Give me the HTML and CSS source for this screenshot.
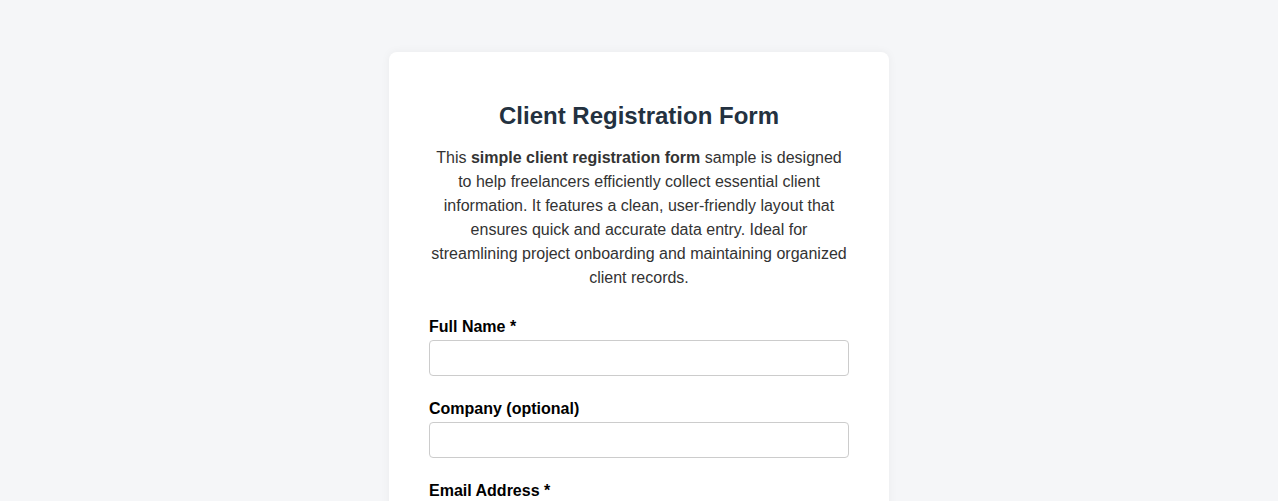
FILE: index.html
```html
<!DOCTYPE html>
<html lang="en">
<head>
    <meta charset="UTF-8">
    <meta name="viewport" content="width=device-width, initial-scale=1.0">
    <title>Client Registration Form</title>
    <link rel="stylesheet" href="styles.css">
</head>
<body>

    <div class="form-container">
        <h2>Client Registration Form</h2>
        <p class="intro">This <strong>simple client registration form</strong> sample is designed to help freelancers efficiently collect essential client information. It features a clean, user-friendly layout that ensures quick and accurate data entry. Ideal for streamlining project onboarding and maintaining organized client records.</p>

        <form>
            <div class="form-group">
                <label for="fullName">Full Name *</label>
                <input type="text" id="fullName" name="fullName" required>
            </div>
            <div class="form-group">
                <label for="company">Company (optional)</label>
                <input type="text" id="company" name="company">
            </div>
            <div class="form-group">
                <label for="email">Email Address *</label>
                <input type="email" id="email" name="email" required>
            </div>
            <div class="form-group">
                <label for="phone">Phone Number</label>
                <input type="tel" id="phone" name="phone">
            </div>
        </form>
    </div>

</body>
</html>
```

FILE: styles.css
```css
body {
    font-family: 'Liberation Sans', Arial, sans-serif;
    background-color: #f5f6f8;
    margin: 0;
    padding: 52px 0 40px;
}

.form-container {
    background-color: #fff;
    width: 420px;
    margin: 0 auto;
    padding: 30px 40px 40px;
    border-radius: 8px;
    box-shadow: 0 0 10px rgba(0, 0, 0, 0.05);
}

h2 {
    text-align: center;
    color: #233140;
    font-size: 24px;
    margin: 20px 0 16px;
}

.intro {
    text-align: center;
    color: #333;
    font-size: 16px;
    line-height: 24px;
    margin: 0 0 28px;
}

.form-group {
    margin-bottom: 24px;
}

label {
    display: block;
    font-weight: bold;
    font-size: 16px;
    color: #000;
    margin-bottom: 4px;
}

input {
    display: block;
    box-sizing: border-box;
    width: 100%;
    height: 36px;
    padding: 8px;
    font-size: 14px;
    border: 1px solid #ccc;
    border-radius: 4px;
}
```
